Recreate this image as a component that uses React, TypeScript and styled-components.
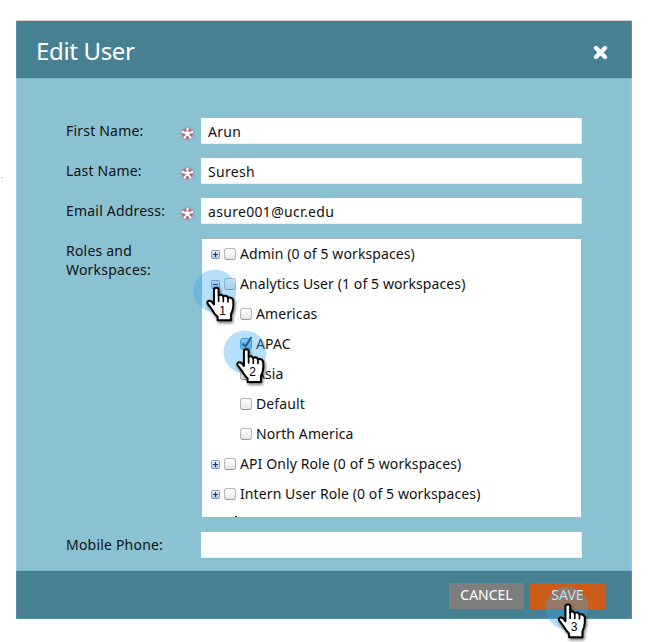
import React from "react";
import styled, { createGlobalStyle } from "styled-components";

const Global = createGlobalStyle`
  * { box-sizing: border-box; }
  body { margin: 0; background: #fff; font-family: "Noto Sans", "Open Sans", sans-serif; }
`;

const Page = styled.main`
  position: relative;
  width: 651px;
  height: 642px;
  padding: 20px 0 0 16px;
  overflow: hidden;
`;

const Speck = styled.i`
  position: absolute;
  left: 1px;
  top: 177px;
  width: 2px;
  height: 1px;
  background: #c8c8c8;
`;

const Dialog = styled.section`
  width: 616px;
  height: 599px;
  display: flex;
  flex-direction: column;
  background: #8ac2d3;
`;

const Header = styled.header`
  height: 58px;
  flex: none;
  display: flex;
  align-items: center;
  justify-content: space-between;
  padding: 3px 24.5px 0 20px;
  background: #468092;
  border-top: 1px solid #cfcfcd;
  box-shadow: inset 1px 0 #5a93a5, inset -1px 0 #5a93a5;
`;

const Title = styled.h1`
  margin: 0;
  padding-bottom: 1px;
  font-size: 24px;
  line-height: 32px;
  font-weight: 400;
  letter-spacing: -0.35px;
  color: #fff;
`;

const CloseButton = styled.button`
  display: flex;
  padding: 2px 0 0;
  border: 0;
  background: none;
`;

const Body = styled.form`
  flex: 1;
  display: flex;
  flex-direction: column;
  gap: 14px;
  padding: 40px 50px 0;
  box-shadow: inset 1px 0 #9dd0df, inset -2px 0 #93cadb, inset 0 1px #79b3c5, inset 0 -1px #79b3c5;
`;

const Field = styled.div<{ $height: number }>`
  height: ${(p) => p.$height}px;
  display: grid;
  grid-template-columns: 112px 23px 381px;
`;

const Label = styled.label`
  padding-top: 3px;
  font-size: 14px;
  line-height: 19px;
  letter-spacing: 0.2px;
  color: #111;
  white-space: nowrap;
`;

const Input = styled.input`
  width: 381px;
  height: 26px;
  padding: 0 7px;
  border: 0;
  outline: 0;
  background: #fff;
  box-shadow: inset -1px -1px #e6f1f5;
  font: 14px "Noto Sans", sans-serif;
  letter-spacing: 0.32px;
  color: #111;
`;

const Tree = styled.div`
  height: 280px;
  overflow: hidden;
  padding-left: 9px;
  background: #fff;
  border: 1px solid #a9b6c0;
`;

const TreeRow = styled.div<{ $child?: boolean }>`
  height: 30px;
  display: flex;
  align-items: center;
  padding-left: ${(p) => (p.$child ? 29 : 0)}px;
`;

const Expander = styled.svg`
  width: 9px;
  height: 9px;
  margin-right: 4px;
  flex: none;
`;

const Box = styled.span`
  width: 12px;
  height: 12px;
  flex: none;
  margin-right: 4px;
  border: 1px solid #b4b4b4;
  border-bottom-color: #999;
  border-radius: 3px;
  background: linear-gradient(#fff, #e6e6e6);
`;

const CheckedBox = styled(Box)`
  border-color: #4b94cf;
  background: linear-gradient(#b6dcf8, #65b2ec);
  svg { display: block; margin: -4px 0 0 -1px; overflow: visible; }
`;

const RowText = styled.span`
  margin-top: -2px;
  font-size: 14px;
  line-height: 19px;
  letter-spacing: 0.1px;
  color: #111;
  white-space: nowrap;
`;

const Footer = styled.footer`
  height: 48px;
  flex: none;
  display: flex;
  justify-content: flex-end;
  gap: 6px;
  padding: 12px 27px 0 0;
  background: #468092;
  box-shadow: inset 1px 0 #5a93a5, inset -1px -1px #5a93a5;
`;

const Button = styled.button<{ $primary?: boolean }>`
  width: 75px;
  height: 26px;
  padding: 0 0 2px;
  border: 0;
  background: ${(p) => (p.$primary ? "#cd5c18" : "#7e7e7e")};
  color: #fff;
  font: 14px/24px "Noto Sans", sans-serif;
`;

const PointerLayer = styled.div<{ $x: number; $y: number }>`
  position: absolute;
  left: ${(p) => p.$x}px;
  top: ${(p) => p.$y}px;
  pointer-events: none;
  svg { display: block; overflow: visible; }
`;

/* Step marker: the origin is the centre of the highlight circle. */
const Pointer = ({ x, y, dx, dy, step }: { x: number; y: number; dx: number; dy: number; step: number }) => (
  <PointerLayer $x={x} $y={y}>
    <svg width="1" height="1">
      <defs>
        <filter id={`shadow${step}`} x="-30%" y="-20%" width="180%" height="160%">
          <feDropShadow dx="3" dy="5" stdDeviation="4" floodOpacity="0.6" />
        </filter>
      </defs>
      <circle r="21.5" fill="#3aa9f2" fillOpacity="0.37" />
      <g transform={`translate(${dx} ${dy}) scale(.3333)`}>
        <g filter={`url(#shadow${step})`} stroke="#000" strokeWidth="6" strokeLinejoin="round" strokeLinecap="round">
          <path
            fill="#fff"
            d="M23 8Q23 2 30 2Q37 2 37 8V25Q46 20 50 28Q60 23 65 32Q77 29 81 40V57Q80 71 74 82V100H34V90Q22 78 17 67L4 50Q1 43 8 41Q15 40 23 52Z"
          />
          <path fill="none" strokeWidth="5" d="M37 25V43M51 29V44M65 33V45" />
        </g>
        <text x="49" y="83" textAnchor="middle" fontFamily="Liberation Sans, sans-serif" fontSize="36" fill="#000">
          {step}
        </text>
      </g>
    </svg>
  </PointerLayer>
);

const Toggle = ({ open }: { open?: boolean }) => (
  <Expander viewBox="0 0 9 9">
    <defs>
      <linearGradient id="toggleFill" x2="0" y2="1">
        <stop stopColor="#f4f8fe" />
        <stop offset="1" stopColor="#a9c3e8" />
      </linearGradient>
    </defs>
    <rect x=".5" y=".5" width="8" height="8" rx="1" fill="url(#toggleFill)" stroke="#7c98c4" />
    <path d={open ? "M2 4.5H7" : "M2 4.5H7M4.5 2V7"} stroke="#1d3564" strokeWidth="1.2" />
  </Expander>
);

const Star = styled.svg`
  width: 15px;
  height: 15px;
  margin: 8px 0 0 2px;
  overflow: visible;
`;

const Required = () => (
  <Star viewBox="-7.5 -7.5 15 15">
    <defs>
      <filter id="redGlow" x="-50%" y="-50%" width="200%" height="200%">
        <feGaussianBlur stdDeviation="1.1" />
      </filter>
    </defs>
    <path d="M0 0V-5M0 0L5-1.6M0 0L3 4.2M0 0L-3 4.2M0 0L-5-1.6" stroke="#c0343c" strokeWidth="5" opacity=".8" filter="url(#redGlow)" />
    <path d="M0 0V-5.6M0 0L5.6-1.8M0 0L3.4 4.8M0 0L-3.4 4.8M0 0L-5.6-1.8" stroke="#fff" strokeWidth="2" />
  </Star>
);

const fields = [
  ["First Name:", "Arun"],
  ["Last Name:", "Suresh"],
  ["Email Address:", "asure001@ucr.edu"],
];

const rows: { text: string; child?: boolean; open?: boolean; checked?: boolean }[] = [
  { text: "Admin (0 of 5 workspaces)" },
  { text: "Analytics User (1 of 5 workspaces)", open: true },
  { text: "Americas", child: true },
  { text: "APAC", child: true, checked: true },
  { text: "Asia", child: true },
  { text: "Default", child: true },
  { text: "North America", child: true },
  { text: "API Only Role (0 of 5 workspaces)" },
  { text: "Intern User Role (0 of 5 workspaces)" },
];

const NextRowTip = styled.i`
  display: block;
  width: 2px;
  height: 2px;
  margin: 7px 0 0 24px;
  background: #222;
`;

export default function App() {
  return (
    <Page>
      <Global />
      <Speck />
      <Dialog>
        <Header>
          <Title>Edit User</Title>
          <CloseButton type="button" aria-label="Close">
            <svg width="15" height="15" viewBox="0 0 15 15">
              <path d="M3 3L12 12M12 3L3 12" stroke="#fff" strokeWidth="4.3" strokeLinecap="round" />
            </svg>
          </CloseButton>
        </Header>
        <Body>
          {fields.map(([label, value]) => (
            <Field key={label} $height={26}>
              <Label>{label}</Label>
              <Required />
              <Input defaultValue={value} />
            </Field>
          ))}
          <Field $height={280}>
            <Label>Roles and<br />Workspaces:</Label>
            <span />
            <Tree>
              {rows.map((r) => (
                <TreeRow key={r.text} $child={r.child}>
                  {!r.child && <Toggle open={r.open} />}
                  {r.checked ? (
                    <CheckedBox>
                      <svg width="14" height="14">
                        <path d="M2.5 8.5L5.5 11.5L11.5 2" fill="none" stroke="#12396d" strokeWidth="2.2" />
                      </svg>
                    </CheckedBox>
                  ) : (
                    <Box />
                  )}
                  <RowText>{r.text}</RowText>
                </TreeRow>
              ))}
              <NextRowTip />
            </Tree>
          </Field>
          <Field $height={26}>
            <Label>Mobile Phone:</Label>
            <span />
            <Input />
          </Field>
        </Body>
        <Footer>
          <Button type="button">CANCEL</Button>
          <Button type="button" $primary>SAVE</Button>
        </Footer>
      </Dialog>
      <Pointer x={214.5} y={290.5} dx={-8.7} dy={-4} step={1} />
      <Pointer x={244.5} y={351.5} dx={-8.7} dy={-3.4} step={2} />
      <Pointer x={566.8} y={607.5} dx={-9.2} dy={-4.2} step={3} />
    </Page>
  );
}
